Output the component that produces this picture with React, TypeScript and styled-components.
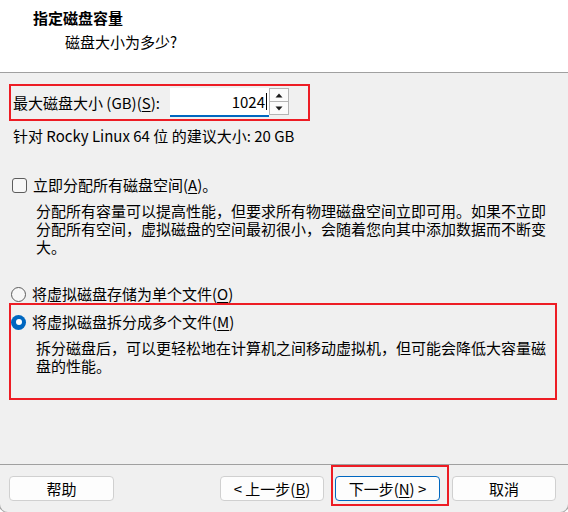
import React from "react";
import styled, { createGlobalStyle, css } from "styled-components";

const Global = createGlobalStyle`
  html, body { margin: 0; padding: 0; }
  body {
    width: 568px;
    height: 512px;
    overflow: hidden;
    background: #ffffff;
    font-family: "Noto Sans CJK SC", "Noto Sans", sans-serif;
    font-size: 15px;
    line-height: 18px;
    color: #000;
  }
  * { box-sizing: border-box; }
`;

const RED = "#ed1c24";
const BLUE = "#0067c0";

const Window = styled.div`
  width: 568px;
  height: 512px;
  display: flex;
  flex-direction: column;
  background: #f0f0f0;
  border-radius: 0 0 8px 8px;
  box-shadow: 0 0 0 1px #a8a8a8;
  overflow: hidden;
`;

const Header = styled.header`
  height: 73px;
  background: #ffffff;
  border-bottom: 1px solid #a0a0a0;
  padding: 9px 0 0 33px;
`;

const Title = styled.div`
  font-weight: 700;
`;

const Subtitle = styled.div`
  margin: 6px 0 0 32px;
`;

const Body = styled.main`
  flex: 1;
  display: flex;
  flex-direction: column;
  align-items: flex-start;
  padding: 0 11px 0 9px;
`;

const Highlight = styled.div<{ $pad: string; $mt?: number; $w?: number }>`
  border: 2px solid ${RED};
  padding: ${(p) => p.$pad};
  margin-top: ${(p) => p.$mt ?? 0}px;
  ${(p) => (p.$w ? `width: ${p.$w}px;` : "align-self: stretch;")}
`;

const SizeRow = styled.div`
  display: flex;
  align-items: center;
`;

const FieldLabel = styled.label`
  width: 158px;
  padding-left: 1px;
`;

const Mn = styled.u`
  text-decoration: underline;
  text-underline-offset: 2px;
  text-decoration-thickness: 1px;
`;

const SpinField = styled.div`
  display: flex;
  align-items: flex-start;
  height: 29px;
`;

const NumberBox = styled.div`
  width: 99px;
  height: 29px;
  background: #ffffff;
  border-bottom: 2px solid ${BLUE};
  display: flex;
  align-items: center;
  justify-content: flex-end;
  padding-right: 2px;
`;

const Caret = styled.span`
  display: inline-block;
  width: 1px;
  height: 17px;
  background: #000;
  margin-left: 1px;
`;

const Spinner = styled.div`
  width: 20px;
  height: 27px;
  display: flex;
  flex-direction: column;
  border: 1px solid #b4b4b4;
  background: #fbfbfb;
`;

const SpinButton = styled.div<{ $down?: boolean }>`
  flex: 1;
  display: flex;
  align-items: center;
  justify-content: center;
  ${(p) =>
    p.$down &&
    css`
      border-top: 1px solid #b4b4b4;
    `}
`;

const Note = styled.div`
  margin: 6px 0 0 4px;
`;

const OptionRow = styled.label<{ $mt: number; $ml: number }>`
  display: flex;
  align-items: center;
  gap: 6px;
  margin-top: ${(p) => p.$mt}px;
  margin-left: ${(p) => p.$ml}px;
`;

const Checkbox = styled.span`
  width: 15px;
  height: 15px;
  border: 1px solid #5d5d5d;
  border-radius: 3px;
  background: #f7f7f7;
`;

const Radio = styled.span<{ $checked?: boolean }>`
  width: 15px;
  height: 15px;
  border-radius: 50%;
  display: flex;
  align-items: center;
  justify-content: center;
  ${(p) =>
    p.$checked
      ? css`
          background: ${BLUE};
          &::after {
            content: "";
            width: 6px;
            height: 6px;
            border-radius: 50%;
            background: #ffffff;
          }
        `
      : css`
          border: 1px solid #5d5d5d;
          background: #f7f7f7;
        `}
`;

const Desc = styled.p<{ $ml: number }>`
  margin: 8px 0 0 ${(p) => p.$ml}px;
  max-width: 516px;
`;

const Footer = styled.footer`
  height: 48px;
  border-top: 1px solid #a0a0a0;
  display: flex;
  align-items: flex-start;
  padding: 0 12px 0 9px;
`;

const Button = styled.button<{ $w: number; $primary?: boolean; $push?: boolean }>`
  width: ${(p) => p.$w}px;
  height: 25px;
  margin-top: 11px;
  ${(p) => p.$push && "margin-left: auto;"}
  background: #fdfdfd;
  border: 1px solid ${(p) => (p.$primary ? BLUE : "#d0d0d0")};
  border-radius: 4px;
  font: inherit;
  color: #000;
  padding: 0;
  display: flex;
  align-items: center;
  justify-content: center;
  white-space: pre;
`;

const NextHighlight = styled.div`
  border: 2px solid ${RED};
  padding: 9px 7px 3px 2px;
  margin: 0 3px 0 7px;
  & > button {
    margin-top: 0;
  }
`;

const Arrow = ({ down }: { down?: boolean }) => (
  <svg width="8" height="5" viewBox="0 0 8 5">
    <path d={down ? "M0.5 0.5 H7.5 L4 4.5 Z" : "M0.5 4.5 H7.5 L4 0.5 Z"} fill="#1a1a1a" />
  </svg>
);

export default function App() {
  return (
    <>
      <Global />
      <Window>
        <Header>
          <Title>指定磁盘容量</Title>
          <Subtitle>磁盘大小为多少?</Subtitle>
        </Header>
        <Body>
          <Highlight $pad="2px 0 2px 1px" $mt={11} $w={301}>
            <SizeRow>
              <FieldLabel>
                最大磁盘大小 (GB)(<Mn>S</Mn>):
              </FieldLabel>
              <SpinField>
                <NumberBox>
                  1024
                  <Caret />
                </NumberBox>
                <Spinner>
                  <SpinButton>
                    <Arrow />
                  </SpinButton>
                  <SpinButton $down>
                    <Arrow down />
                  </SpinButton>
                </Spinner>
              </SpinField>
            </SizeRow>
          </Highlight>
          <Note>针对 Rocky Linux 64 位 的建议大小: 20 GB</Note>

          <OptionRow $mt={31} $ml={3}>
            <Checkbox />
            <span>
              立即分配所有磁盘空间(<Mn>A</Mn>)。
            </span>
          </OptionRow>
          <Desc $ml={27}>
            分配所有容量可以提高性能，但要求所有物理磁盘空间立即可用。如果不立即分配所有空间，虚拟磁盘的空间最初很小，会随着您向其中添加数据而不断变大。
          </Desc>

          <OptionRow $mt={29} $ml={2}>
            <Radio />
            <span>
              将虚拟磁盘存储为单个文件(<Mn>O</Mn>)
            </span>
          </OptionRow>
          <Highlight $pad="8px 0 23px 0">
            <OptionRow $mt={0} $ml={0}>
              <Radio $checked />
              <span>
                将虚拟磁盘拆分成多个文件(<Mn>M</Mn>)
              </span>
            </OptionRow>
            <Desc $ml={25}>
              拆分磁盘后，可以更轻松地在计算机之间移动虚拟机，但可能会降低大容量磁盘的性能。
            </Desc>
          </Highlight>
        </Body>
        <Footer>
          <Button $w={105}>帮助</Button>
          <Button $w={104} $push>
            {"< 上一步("}
            <Mn>B</Mn>
            {")"}
          </Button>
          <NextHighlight>
            <Button $w={105} $primary>
              {"下一步("}
              <Mn>N</Mn>
              {") >"}
            </Button>
          </NextHighlight>
          <Button $w={104}>取消</Button>
        </Footer>
      </Window>
    </>
  );
}
